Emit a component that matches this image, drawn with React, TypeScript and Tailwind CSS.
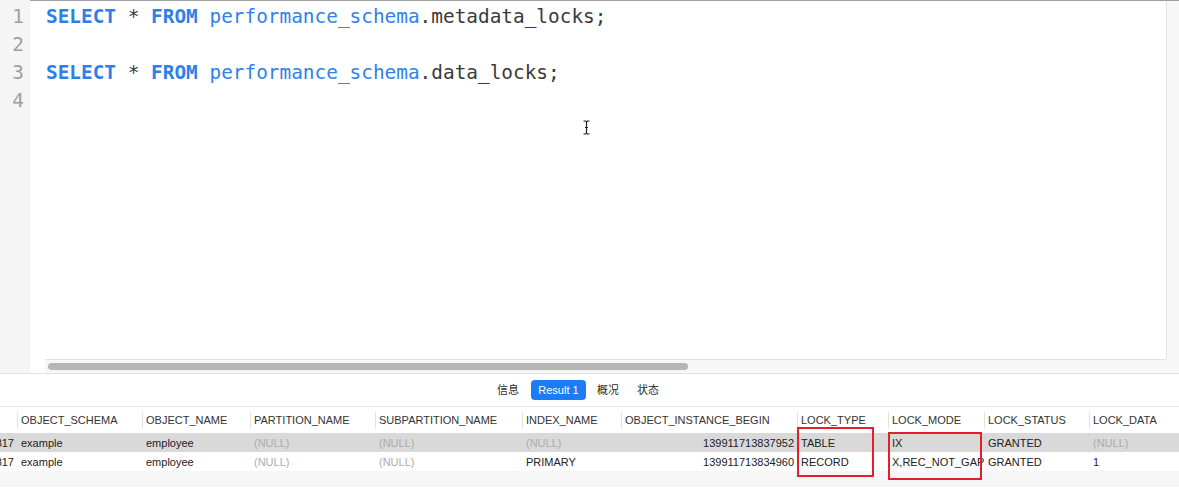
import React from 'react';

const mono = { fontFamily: '"DejaVu Sans Mono", "Liberation Mono", monospace' };
const sans = { fontFamily: '"Liberation Sans", "Noto Sans CJK SC", sans-serif' };

const cols = [17, 125, 108, 125, 147, 99, 176, 91, 96, 105, 90];
const headers = ['', 'OBJECT_SCHEMA', 'OBJECT_NAME', 'PARTITION_NAME', 'SUBPARTITION_NAME', 'INDEX_NAME', 'OBJECT_INSTANCE_BEGIN', 'LOCK_TYPE', 'LOCK_MODE', 'LOCK_STATUS', 'LOCK_DATA'];

const rows = [
  ['4817', 'example', 'employee', null, null, null, '139911713837952', 'TABLE', 'IX', 'GRANTED', null],
  ['4817', 'example', 'employee', null, null, 'PRIMARY', '139911713834960', 'RECORD', 'X,REC_NOT_GAP', 'GRANTED', '1'],
];

function CodeLine({ table }: { table: string }) {
  return (
    <div className="h-[28px] leading-[28px] whitespace-pre text-[#3a3a3a]">
      <span className="font-bold text-[#2f7fe6]">SELECT</span>
      <span> * </span>
      <span className="font-bold text-[#2f7fe6]">FROM</span>
      <span> </span>
      <span className="text-[#2f82ea]">performance_schema</span>
      <span>.{table};</span>
    </div>
  );
}

export default function App() {
  return (
    <div className="relative w-[1179px] h-[502px] bg-white overflow-hidden" style={sans}>
      {/* editor */}
      <div className="flex h-[374px] border-b border-[#e2e2e2]">
        <div className="w-[30px] bg-[#f5f5f5] pt-[3px] pr-[6px] text-right text-[19.4px] text-[#a0a0a0]" style={mono}>
          {[1, 2, 3, 4].map((n) => (
            <div key={n} className="h-[28px] leading-[28px]">{n}</div>
          ))}
        </div>
        <div className="flex-1 flex flex-col">
          <div className="flex h-[359px] border-t border-[#a0a0a0]">
            <div className="flex-1 border-r border-[#e6e6e6] pl-[16px] pt-[2px] text-[19.4px]" style={mono}>
              <CodeLine table="metadata_locks" />
              <div className="h-[28px]" />
              <CodeLine table="data_locks" />
              <div className="h-[28px]" />
            </div>
            <div className="w-[12px] bg-[#f7f7f7]" />
          </div>
          <div className="flex h-[14px]">
            <div className="w-[15px]" />
            <div className="w-[1121px] bg-[#f7f7f7] border-t border-[#e3e3e3] pl-[3px] pt-[3px]">
              <div className="w-[640px] h-[7px] rounded-full bg-[#b6b6b6]" />
            </div>
            <div className="flex-1 bg-[#f7f7f7]" />
          </div>
        </div>
      </div>

      {/* tabs */}
      <div className="h-[32px] flex items-center pl-[497px] text-[11px] text-[#2a2a2a]">
        <span>信息</span>
        <span className="ml-[12px] w-[55px] h-[20px] rounded-[4px] bg-[#1b7cf4] text-white flex items-center justify-center">Result 1</span>
        <span className="ml-[11px]">概况</span>
        <span className="ml-[18px]">状态</span>
      </div>

      {/* result grid */}
      <div className="border-t border-[#e6e6e6] text-[11px]">
        <div className="flex h-[26px] pt-[1px]">
          {headers.map((h, i) => (
            <div key={i} className="flex items-center shrink-0 text-[#333]" style={{ width: cols[i] }}>
              {i > 0 && <span className="w-px h-[17px] bg-[#e2e2e2]" />}
              <span className="ml-[3px] whitespace-nowrap">{h}</span>
            </div>
          ))}
        </div>
        {rows.map((r, ri) => (
          <div key={ri} className={`flex h-[19px] pt-[1px] items-center ${ri === 0 ? 'bg-[#d9d9d9]' : 'bg-white'}`}>
            {r.map((c, i) => (
              <div
                key={i}
                className={`shrink-0 overflow-hidden whitespace-nowrap flex ${i === 0 || i === 6 ? 'justify-end pr-[3px]' : 'pl-[4px]'} ${c === null ? 'text-[#acacac]' : 'text-[#222]'}`}
                style={{ width: cols[i] }}
              >
                {c === null ? '(NULL)' : c}
              </div>
            ))}
          </div>
        ))}
        <div className="h-[16px] bg-[#f6f6f6]" />
      </div>

      {/* text cursor */}
      <svg className="absolute left-[582px] top-[120px]" width="9" height="15" viewBox="0 0 9 15">
        <path d="M1.5 1 H3.5 L4.5 2 L5.5 1 H7.5 M4.5 2 V13 M1.5 14 H3.5 L4.5 13 L5.5 14 H7.5 M3 7.5 H6" stroke="#222" strokeWidth="1.2" fill="none" />
      </svg>

      {/* highlight boxes */}
      <div className="absolute left-[797px] top-[427px] w-[77px] h-[50px] border-2 border-[#e0202a]" />
      <div className="absolute left-[888px] top-[432px] w-[94px] h-[48px] border-2 border-[#e0202a]" />
    </div>
  );
}
